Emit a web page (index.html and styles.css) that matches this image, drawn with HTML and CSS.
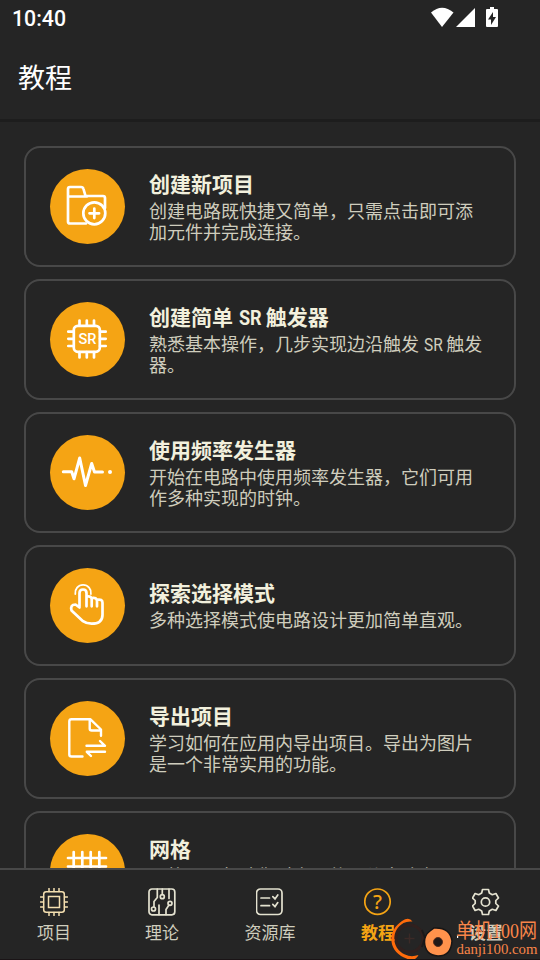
FILE: index.html
```html
<!DOCTYPE html>
<html lang="zh-CN">
<head>
<meta charset="utf-8">
<title>教程</title>
<link rel="stylesheet" href="styles.css">
</head>
<body>
<div class="screen">
  <div class="status">
    <span class="clock">10:40</span>
    <svg class="status-icons" width="70" height="24" viewBox="0 0 70 24" fill="#fff">
      <path d="M1 6.500Q12-3 23.500 6.500L12 21z" transform="translate(0 2)"/>
      <path d="M26 23 45 4v19z"/>
      <path fill-rule="evenodd" d="M60 3h4v2h3q1 0 1 1v16q0 1-1 1H57q-1 0-1-1V6q0-1 1-1h3zM63 8l-5 7.500h3V21l5-8h-3z"/>
    </svg>
  </div>
  <header class="appbar"><h1>教程</h1></header>
  <main class="list">
    <article class="card">
      <svg class="badge" viewBox="0 0 75 75"><path d="M18 28V20q0-2 2-2h11q2 0 2.500 2l2 7H53q2 0 2 2v10M18 27.500H37M18 27v25.500q0 2 2 2H36"/><circle cx="44.300" cy="44.300" r="11"/><path d="M39.500 44.300h9.600M44.300 39.500v9.600"/></svg>
      <div class="copy"><h2>创建新项目</h2><p>创建电路既快捷又简单，只需点击即可添<br>加元件并完成连接。</p></div>
    </article>
    <article class="card">
      <svg class="badge" viewBox="0 0 75 75"><rect x="23.800" y="23.800" width="26" height="26" rx="4"/><path d="M29.500 18.500v5M36.800 18.500v5M44 18.500v5M29.500 50v5.500M36.800 50v5.500M44 50v5.500M18.300 29.700h5M18.300 36.800h5M18.300 44h5M50 29.700h5.700M50 36.800h5.700M50 44h5.700"/><text class="sr" x="37.500" y="42" textLength="18" lengthAdjust="spacingAndGlyphs">SR</text></svg>
      <div class="copy"><h2>创建简单 <span class="latin">SR</span> 触发器</h2><p>熟悉基本操作，几步实现边沿触发 <span class="latin">SR</span> 触发<br>器。</p></div>
    </article>
    <article class="card">
      <svg class="badge" viewBox="0 0 75 75"><path class="pulse" d="M13.300 36.800h8.400l2.300 7L29.700 23l5.800 27.500 6.200-22 2.800 8.500H52.500"/><circle class="solid" cx="60" cy="37" r="2"/></svg>
      <div class="copy"><h2>使用频率发生器</h2><p>开始在电路中使用频率发生器，它们可用<br>作多种实现的时钟。</p></div>
    </article>
    <article class="card">
      <svg class="badge" viewBox="0 0 75 75"><path class="thin" d="M25.300 26a7.900 7.900 0 1 1 15.600 0"/><path d="M29.500 38.500V25q0-3.500 3.500-3.500t3.500 3.500V38.300M36.500 28.500q5-1 5.200 3v6.800M41.700 30q5-1 5.300 3v5.300M47 31.800q5.500-1 5.500 3V47q0 8.700-11 8.700-5 0-8.500-2.500L21.500 42.500q-1.500-6 4-6l4 3"/></svg>
      <div class="copy"><h2>探索选择模式</h2><p>多种选择模式使电路设计更加简单直观。</p></div>
    </article>
    <article class="card">
      <svg class="badge" viewBox="0 0 75 75"><path class="medium" d="M51 34.800V28.500L40.500 18.300H21.500q-2.200 0-2.200 2.200v33q0 2 2.200 2H32.500M39.700 18.500V27.500q0 2 2 2H51M36.500 44.800h18.500l-5-4.800M55 50.800H36.800l4.200 4.200"/></svg>
      <div class="copy"><h2>导出项目</h2><p>学习如何在应用内导出项目。导出为图片<br>是一个非常实用的功能。</p></div>
    </article>
    <article class="card">
      <svg class="badge" viewBox="0 0 75 75"><path d="M23.700 18v38M32.300 18v38M40.700 18v38M49.300 18v38M18 24h38M18 32.500h38M18 41h38M18 49.500h38"/></svg>
      <div class="copy"><h2>网格</h2><p>网格可以帮助您对齐元件，使电路布<br>局更加整洁。</p></div>
    </article>
  </main>
  <nav class="tabs">
    <a class="tab"><svg class="project" viewBox="0 0 28 28"><rect x="3.700" y="3.700" width="20.600" height="20.600" rx="2.500"/><rect x="8.500" y="8.500" width="11" height="11"/><path d="M9 .5v3M14 .5v3M19 .5v3M9 24.500v3M14 24.500v3M19 24.500v3M.5 9h3M.5 14h3M.5 19h3M24.500 9h3M24.500 14h3M24.500 19h3"/></svg><span>项目</span></a>
    <a class="tab"><svg viewBox="0 0 28 28"><rect x="1" y="1" width="25.800" height="25.800" rx="3"/><path d="M9.300 1v8.500L6 13.500V19M14.300 1v5.500M21 1v9.500M11 17v9.500M18 26.500V21.500l2.800-4.200"/><circle cx="5.500" cy="21" r="2"/><circle cx="14.300" cy="8.700" r="2"/><circle cx="22" cy="15.300" r="2"/></svg><span>理论</span></a>
    <a class="tab"><svg viewBox="0 0 28 28"><rect x="0.500" y="1" width="25.500" height="25.500" rx="4"/><path d="M5 10h8.500M5 17.700h8.500M16.800 8.700l2.200 2.200 2.800-4M16.800 16.400l2.200 2.200 2.800-4"/></svg><span>资源库</span></a>
    <a class="tab active"><svg viewBox="0 0 28 28"><circle cx="13.500" cy="13.700" r="12.700"/><text class="question" x="13.600" y="21">?</text></svg><span>教程</span></a>
    <a class="tab"><svg viewBox="0 0 28 28"><path d="M10.500 1.500h6l.8 3.500 3 1.700 3.600-1.200 2.600 4.500-2.700 2.500v3l2.700 2.500-2.600 4.500-3.600-1.200-3 1.700-.8 3.500h-6l-.8-3.500-3-1.700-3.600 1.200L.5 18l2.700-2.500v-3L.5 10l2.600-4.500 3.600 1.200 3-1.700z" stroke-linejoin="round"/><circle cx="13.500" cy="14" r="4.200"/></svg><span class="strong">设置</span></a>
  </nav>
  <svg class="watermark" width="150" height="42" viewBox="390 918 150 42">
    <g fill="none"><circle cx="409.500" cy="938.500" r="13.500" stroke="#30201e" stroke-width="3"/><path d="M404.500 938.500h10M409.500 933.500v10" stroke="#3b2a27" stroke-width="1.500"/><path d="M422 930l3 8-3 9" stroke="#1b1819" stroke-width="2"/></g>
    <path d="M412.500 921.500Q409 916.500 402 921C387 931 388 950 404 957.500Q415 963 418.500 955Q411 957.500 405 954.500C391 948 391 930 403.500 923Q407 921 412.500 921.500" fill="#ff6b0b"/>
    <path d="M430 931l4-3q16-1 18 13-1 15-14 15-13-1-13.500-14 0-7 5.500-11z" fill="#ff924c" stroke="#171515" stroke-width="1.500"/>
    <circle cx="438" cy="942" r="4.500" fill="#211918" stroke="#5a2d1c"/>
    <rect x="457" y="936" width="1.200" height="2" fill="#fff"/>
    <g class="mark"><text x="456" y="937.500" font-size="20" textLength="81" lengthAdjust="spacingAndGlyphs">单机100网</text><text x="456.500" y="954" font-size="15" textLength="81" lengthAdjust="spacingAndGlyphs">danji100.com</text></g>
  </svg>
</div>
</body>
</html>
```
FILE: styles.css
```css
* { box-sizing: border-box; }
body { margin: 0; background: #252525; font-family: "Noto Sans CJK SC", sans-serif; }
.screen { position: relative; width: 540px; height: 960px; overflow: hidden; display: flex; flex-direction: column; background: #252525; border-bottom: 1px solid #1a1416; }
.status { height: 37px; flex: none; display: flex; justify-content: space-between; align-items: flex-start; padding: 4px 40px 0 12px; color: #fff; font-family: Roboto, sans-serif; }
.clock { font-size: 21.300px; line-height: 30px; font-weight: 500; }
.status-icons { width: 70px; }
.appbar { height: 85px; flex: none; padding: 20px 18px 0; border-bottom: 3px solid #1d1d1d; }
h1 { margin: 0; color: #fff; font-size: 27px; line-height: 40px; font-weight: 400; }
.list { flex: 1; min-height: 0; overflow: hidden; padding: 24px 24px 0; display: flex; flex-direction: column; gap: 12px; }
.card { height: 121px; flex: none; display: flex; align-items: center; gap: 24px; padding: 0 24px; border: 2px solid #484848; border-radius: 16px; }
.badge { width: 75px; height: 75px; flex: none; border-radius: 50%; background: #f5a414; fill: none; stroke: #fff; stroke-width: 2.7; stroke-linecap: round; stroke-linejoin: round; }
.badge .thin { stroke-width: 1.8; }
.badge .medium { stroke-width: 2.4; }
.badge .pulse { stroke-width: 3; }
.badge .solid { fill: #fff; stroke: none; }
.sr { fill: #fff; stroke: none; font: 500 15px Roboto, sans-serif; text-anchor: middle; }
.copy { white-space: nowrap; }
h2 { margin: 0 0 6px; color: #f2f0dd; font-size: 21px; line-height: 22px; font-weight: 700; }
p { margin: 0; color: #cfcdbd; font-size: 18px; line-height: 21px; }
.latin { display: inline-block; font-family: Roboto, sans-serif; line-height: 0; transform: scaleX(.86); transform-origin: left; margin: 0 -.19em 0 .04em; }
.tabs { height: 91px; flex: none; display: grid; grid-template-columns: repeat(5, 1fr); border-top: 2px solid #484848; padding-top: 18px; }
.tab { display: flex; flex-direction: column; align-items: center; gap: 4px; color: #cfcdbd; font-size: 17px; line-height: 23px; }
.tab svg { width: 28px; height: 28px; fill: none; stroke: #e4e2d0; stroke-width: 1.7; stroke-linecap: round; }
.tab .project { stroke: #f4dfb0; stroke-width: 1.5; }
.tab.active { color: #f5a414; font-weight: 700; }
.tab.active svg { stroke: #f5a414; }
.strong { font-weight: 700; }
.question { font: 500 20px "Noto Sans", sans-serif; fill: #f5a414; stroke: none; text-anchor: middle; }
.watermark { position: absolute; left: 390px; top: 918px; }
.mark { fill: #f98549; font-family: "Liberation Serif", "Noto Sans CJK SC", serif; }
```
